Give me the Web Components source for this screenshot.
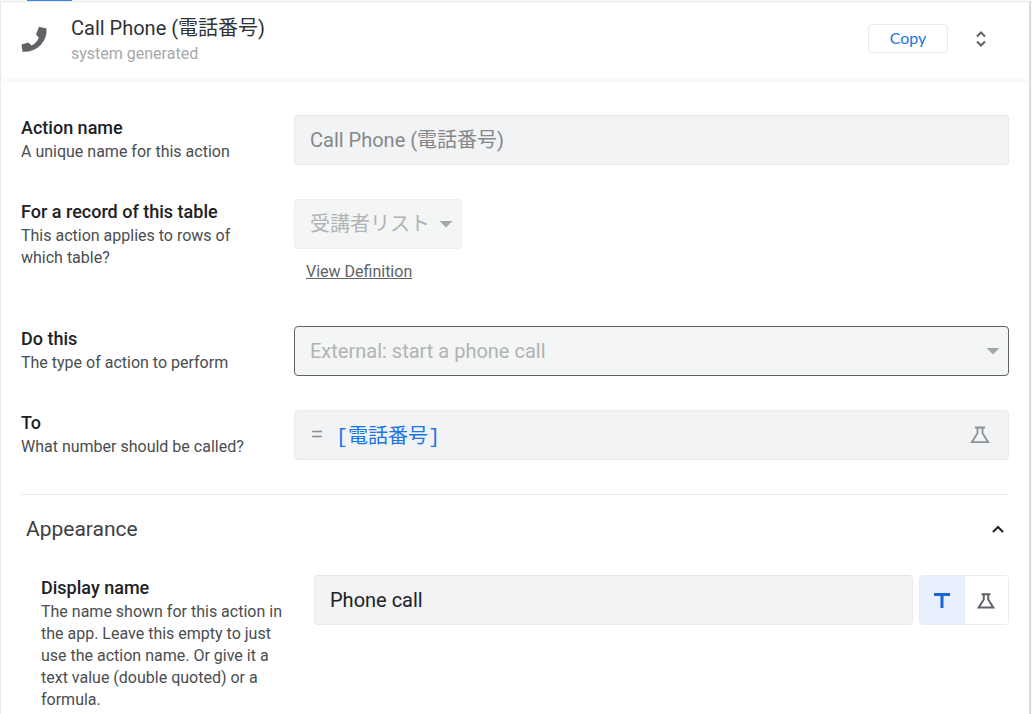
<!DOCTYPE html>
<html lang="en">
<head>
<meta charset="utf-8">
<meta name="viewport" content="width=device-width, initial-scale=1">
<title>Action editor</title>
<style>
  html, body { margin: 0; background: #fff; }
  body {
    font-family: Roboto, "Noto Sans CJK JP", sans-serif;
    color: #202124;
    --line: #e8eaed;
    --field: #f1f3f4;
    --muted: #4a4d51;
    --blue: #1a73e8;
  }
</style>
</head>
<body>
<action-editor></action-editor>
<script>
const FLASK = `<svg class="flask" viewBox="0 0 20 18" width="20" height="18" fill="none" stroke="currentColor" stroke-width="1.800" aria-hidden="true"><path d="M5 1.500H15M7.500 1.500V7.200L1.800 16.200H18.200L12.500 7.200V1.500"/></svg>`;

function define(name, html, setup) {
  const template = document.createElement('template');
  template.innerHTML = `<style>*{box-sizing:border-box}${html.css}</style>${html.body}`;
  customElements.define(name, class extends HTMLElement {
    connectedCallback() {
      if (this.shadowRoot) return;
      const root = this.attachShadow({ mode: 'open' });
      root.append(template.content.cloneNode(true));
      if (setup) setup(this, root);
    }
  });
}

const ROW_CSS = `
  :host { display: grid; grid-template-columns: 244px minmax(0, 1fr); column-gap: 29px; align-items: start; min-height: 50px; }
  label { display: block; font-size: 18px; font-weight: 500; line-height: 25px; }
  p { margin: 0; padding-top: 1px; font-size: 16px; line-height: 22px; color: var(--muted); }
  .box { height: 50px; border: 1px solid var(--line); border-radius: 4px; background: var(--field); display: flex; align-items: center; }
  .edge { border-top-color: #e0e3e7; }
  input { flex: 1; min-width: 0; height: 100%; padding: 0 15px; border: 0; background: none; font: 20px Roboto, "Noto Sans CJK JP", sans-serif; color: inherit; outline: 0; }
  input:disabled { padding-bottom: 4px; color: #85888b; opacity: 1; }
`;
const ROW_TEXT = `<div class="text"><label for="control"></label><p id="hint"></p></div>`;
function fillRow(host, root) {
  root.querySelector('label').textContent = host.getAttribute('label');
  root.querySelector('p').textContent = host.getAttribute('hint');
}

define('text-row', {
  css: ROW_CSS,
  body: `${ROW_TEXT}<div class="box edge"><input id="control" type="text" aria-describedby="hint"></div>`
}, (host, root) => {
  fillRow(host, root);
  const input = root.querySelector('input');
  input.value = host.getAttribute('value');
  input.disabled = host.hasAttribute('disabled');
});

define('select-row', {
  css: ROW_CSS + `
  .side { display: flex; flex-direction: column; align-items: flex-start; }
  .pick { display: grid; align-items: center; }
  :host([wide]) .pick { width: 100%; }
  select, svg { grid-area: 1 / 1; }
  select { appearance: none; width: 100%; height: 50px; padding: 0 31px 0 15px; border: 1px solid #eceeef; border-radius: 4px; background: #f4f6f6; color: #b0b2b3; opacity: 1; font: 20px Roboto, "Noto Sans CJK JP", sans-serif; }
  :host([wide]) select { border-color: #5f6368; }
  svg { justify-self: end; margin-right: 9px; color: #a3a8ab; pointer-events: none; }
  `,
  body: `${ROW_TEXT}<div class="side"><div class="pick"><select id="control" disabled aria-describedby="hint"><option></option></select><svg width="14" height="7" viewBox="0 0 14 7" aria-hidden="true"><path fill="currentColor" d="M0.500 0H13.500L7 6.500Z"/></svg></div><slot></slot></div>`
}, (host, root) => {
  fillRow(host, root);
  root.querySelector('option').textContent = host.getAttribute('value');
});

define('formula-row', {
  css: ROW_CSS + `
  .equals { padding-left: 16px; color: #8a8d90; font: 20px "Liberation Mono", monospace; }
  input { padding: 0 13px 2px; color: var(--blue); font-family: "Liberation Mono", "Noto Sans CJK JP", monospace; }
  button { border: 0; background: none; padding: 0; margin-right: 18px; display: flex; color: #8f9294; }
  `,
  body: `${ROW_TEXT}<div class="box"><span class="equals">=</span><input id="control" type="text" aria-describedby="hint"><button type="button" aria-label="Open expression assistant">${FLASK}</button></div>`
}, (host, root) => {
  fillRow(host, root);
  root.querySelector('input').value = host.getAttribute('value');
});

define('mode-row', {
  css: ROW_CSS + `
  .side { display: grid; grid-template-columns: minmax(0, 1fr) 90px; gap: 6px; }
  .modes { display: flex; height: 50px; border: 1px solid var(--line); border-radius: 4px; overflow: hidden; }
  button { flex: 1; display: flex; align-items: center; justify-content: center; border: 0; padding: 1px 0 0; background: #fff; color: #5f6368; }
  button[aria-pressed=true] { background: #e8f0fe; color: #1967d2; border-right: 1px solid var(--line); }
  .flask { width: 18px; height: 16px; stroke-width: 2.200; }
  `,
  body: `${ROW_TEXT}<div class="side"><div class="box edge"><input id="control" type="text" aria-describedby="hint"></div><div class="modes"><button type="button" aria-pressed="true" aria-label="Text value"><svg width="16" height="16" viewBox="0 0 16 16" aria-hidden="true"><path fill="currentColor" d="M0 0H16V3H9.500V15H6.500V3H0Z"/></svg></button><button type="button" aria-pressed="false" aria-label="Formula">${FLASK}</button></div></div>`
}, (host, root) => {
  fillRow(host, root);
  root.querySelector('input').value = host.getAttribute('value');
});

define('action-header', {
  css: `
  :host { display: flex; align-items: center; height: 81px; padding: 0 42px 4px 17px; border-bottom: 4px solid #f8f9fb; }
  .phone { color: #5f6368; flex: none; }
  .names { flex: 1; padding: 1px 0 0 21px; }
  h1 { margin: 0; font-size: 20px; line-height: 29px; font-weight: 400; color: #303336; }
  p { margin: 0; font-size: 16px; line-height: 22px; color: #a6a8aa; }
  button { font: 16px Lato, sans-serif; background: #fff; padding: 0; }
  .copy { width: 80px; height: 29px; border: 1px solid var(--line); border-radius: 4px; color: var(--blue); line-height: 25px; padding-bottom: 2px; }
  .sort { display: flex; margin-left: 27px; border: 0; color: #5f6368; }
  `,
  body: `<svg class="phone" width="32" height="32" viewBox="0 0 32 32" aria-hidden="true"><path fill="currentColor" d="M3.500 21.500L10.500 19.500L13.500 22.400Q19 19.800 20.800 14.500L18 11.500L21 3.800L28.500 5.500Q29.500 14.500 22.500 22.300Q15.500 29.300 4.500 28.800Z"/></svg>
  <div class="names"><h1><slot></slot></h1><p><slot name="note"></slot></p></div>
  <button class="copy" type="button">Copy</button>
  <button class="sort" type="button" aria-label="Expand or collapse"><svg width="12" height="16" viewBox="0 0 12 16" fill="none" stroke="currentColor" stroke-width="2" aria-hidden="true"><path d="M2 5.500L6 1.500L10 5.500M2 10.500L6 14.500L10 10.500"/></svg></button>`
});

define('section-heading', {
  css: `
  :host { display: block; }
  h2 { margin: 0; font: inherit; }
  button { display: flex; width: 100%; align-items: center; justify-content: space-between; height: 30px; padding: 0 5px; border: 0; background: none; color: #3c4043; font: 21px Roboto, sans-serif; }
  `,
  body: `<h2><button type="button" aria-expanded="true"><slot></slot><svg width="12" height="8" viewBox="0 0 12 8" fill="none" stroke="#202124" stroke-width="2" aria-hidden="true"><path d="M1 7L6 2L11 7"/></svg></button></h2>`
});

define('action-editor', {
  css: `
  :host { display: block; }
  .tab { width: 45px; height: 1px; margin-left: 27px; background: var(--blue); }
  main { min-height: calc(100vh - 1px); margin-right: 2px; border: 1px solid var(--line); border-right: 1px solid #dadce0; border-bottom: 0; box-shadow: 1px 0 1px #dadce0; }
  .rows { display: grid; gap: 34px; padding: 32px 20px 34px; }
  .rows select-row:not([wide]) { min-height: 93px; }
  a { margin: 12px 0 0 12px; font-size: 16px; line-height: 22px; color: #5f6368; text-decoration: underline; }
  section { margin: 0 20px; padding-top: 19px; border-top: 1px solid var(--line); }
  mode-row { margin: 31px 0 0 20px; }
  `,
  body: `<div class="tab"></div><main>
  <action-header>Call Phone (電話番号)<span slot="note">system generated</span></action-header>
  <div class="rows">
    <text-row label="Action name" hint="A unique name for this action" value="Call Phone (電話番号)" disabled></text-row>
    <select-row label="For a record of this table" hint="This action applies to rows of which table?" value="受講者リスト"><a href="#definition">View Definition</a></select-row>
    <select-row wide label="Do this" hint="The type of action to perform" value="External: start a phone call"></select-row>
    <formula-row label="To" hint="What number should be called?" value="[電話番号]"></formula-row>
  </div>
  <section>
    <section-heading>Appearance</section-heading>
    <mode-row label="Display name" hint="The name shown for this action in the app. Leave this empty to just use the action name. Or give it a text value (double quoted) or a formula." value="Phone call"></mode-row>
  </section></main>`
});
</script>
</body>
</html>
